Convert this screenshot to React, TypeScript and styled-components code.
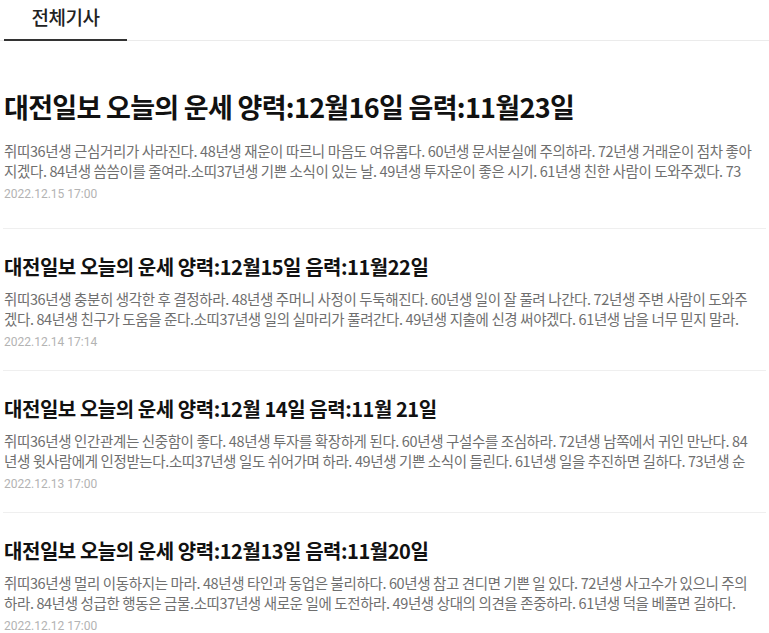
import React from 'react'
import styled, { createGlobalStyle } from 'styled-components'

interface Article {
  title: string
  lines: string[]
  date: string
}

const articles: Article[] = [
  {
    title: '대전일보 오늘의 운세 양력:12월16일 음력:11월23일',
    lines: [
      '쥐띠36년생 근심거리가 사라진다. 48년생 재운이 따르니 마음도 여유롭다. 60년생 문서분실에 주의하라. 72년생 거래운이 점차 좋아',
      '지겠다. 84년생 씀씀이를 줄여라.소띠37년생 기쁜 소식이 있는 날. 49년생 투자운이 좋은 시기. 61년생 친한 사람이 도와주겠다. 73'
    ],
    date: '2022.12.15 17:00'
  },
  {
    title: '대전일보 오늘의 운세 양력:12월15일 음력:11월22일',
    lines: [
      '쥐띠36년생 충분히 생각한 후 결정하라. 48년생 주머니 사정이 두둑해진다. 60년생 일이 잘 풀려 나간다. 72년생 주변 사람이 도와주',
      '겠다. 84년생 친구가 도움을 준다.소띠37년생 일의 실마리가 풀려간다. 49년생 지출에 신경 써야겠다. 61년생 남을 너무 믿지 말라.'
    ],
    date: '2022.12.14 17:14'
  },
  {
    title: '대전일보 오늘의 운세 양력:12월 14일 음력:11월 21일',
    lines: [
      '쥐띠36년생 인간관계는 신중함이 좋다. 48년생 투자를 확장하게 된다. 60년생 구설수를 조심하라. 72년생 남쪽에서 귀인 만난다. 84',
      '년생 윗사람에게 인정받는다.소띠37년생 일도 쉬어가며 하라. 49년생 기쁜 소식이 들린다. 61년생 일을 추진하면 길하다. 73년생 순'
    ],
    date: '2022.12.13 17:00'
  },
  {
    title: '대전일보 오늘의 운세 양력:12월13일 음력:11월20일',
    lines: [
      '쥐띠36년생 멀리 이동하지는 마라. 48년생 타인과 동업은 불리하다. 60년생 참고 견디면 기쁜 일 있다. 72년생 사고수가 있으니 주의',
      '하라. 84년생 성급한 행동은 금물.소띠37년생 새로운 일에 도전하라. 49년생 상대의 의견을 존중하라. 61년생 덕을 베풀면 길하다.'
    ],
    date: '2022.12.12 17:00'
  }
]

const App: React.FC = () => {
  return (
    <>
      <GlobalStyle />
      <Page>
        <TabBar>
          <Tab>전체기사</Tab>
        </TabBar>
        <List>
          {articles.map((article, i) => (
            <Item key={article.date} featured={i === 0}>
              <Title featured={i === 0}>{article.title}</Title>
              <Summary featured={i === 0}>
                {article.lines.map(line => (
                  <Line key={line}>{line}</Line>
                ))}
              </Summary>
              <DateText>{article.date}</DateText>
            </Item>
          ))}
        </List>
      </Page>
    </>
  )
}

const GlobalStyle = createGlobalStyle`
  html, body {
    margin: 0;
    padding: 0;
    background: #ffffff;
  }
  body {
    font-family: "Noto Sans CJK KR", "Noto Sans", sans-serif;
  }
`
const Page = styled.div`
  width: 769px;
  overflow: hidden;
`
const TabBar = styled.div`
  display: flex;
  padding: 0 4px;
  border-bottom: 1px solid #ebebeb;
`
const Tab = styled.div`
  width: 123px;
  height: 41px;
  display: flex;
  align-items: center;
  justify-content: center;
  box-sizing: border-box;
  padding-bottom: 7px;
  font-size: 19px;
  font-weight: 500;
  color: #222;
  letter-spacing: -0.5px;
  border-bottom: 2px solid #333;
  margin-bottom: -1px;
`
const List = styled.div`
  padding: 0 3px;
`
const Item = styled.div<{ featured: boolean }>`
  display: flex;
  flex-direction: column;
  padding: ${({ featured }) => (featured ? '47px 1px 25px' : '24px 1px 19px')};
  border-bottom: 1px solid #efefef;
`
const Title = styled.div<{ featured: boolean }>`
  font-size: ${({ featured }) => (featured ? '27px' : '20px')};
  line-height: ${({ featured }) => (featured ? '38px' : '28px')};
  font-weight: 700;
  color: #111;
  letter-spacing: ${({ featured }) => (featured ? '-0.7px' : '-0.45px')};
  white-space: nowrap;
`
const Summary = styled.div<{ featured: boolean }>`
  margin-top: ${({ featured }) => (featured ? '15px' : '8px')};
  font-size: 14.5px;
  line-height: 20px;
  color: #6f6f6f;
  letter-spacing: -0.38px;
`
const Line = styled.div`
  white-space: nowrap;
  overflow: hidden;
`
const DateText = styled.div`
  margin-top: 4px;
  font-size: 12px;
  line-height: 18px;
  color: #b3b3b3;
  font-family: "Roboto", "Noto Sans", sans-serif;
`

export default App
